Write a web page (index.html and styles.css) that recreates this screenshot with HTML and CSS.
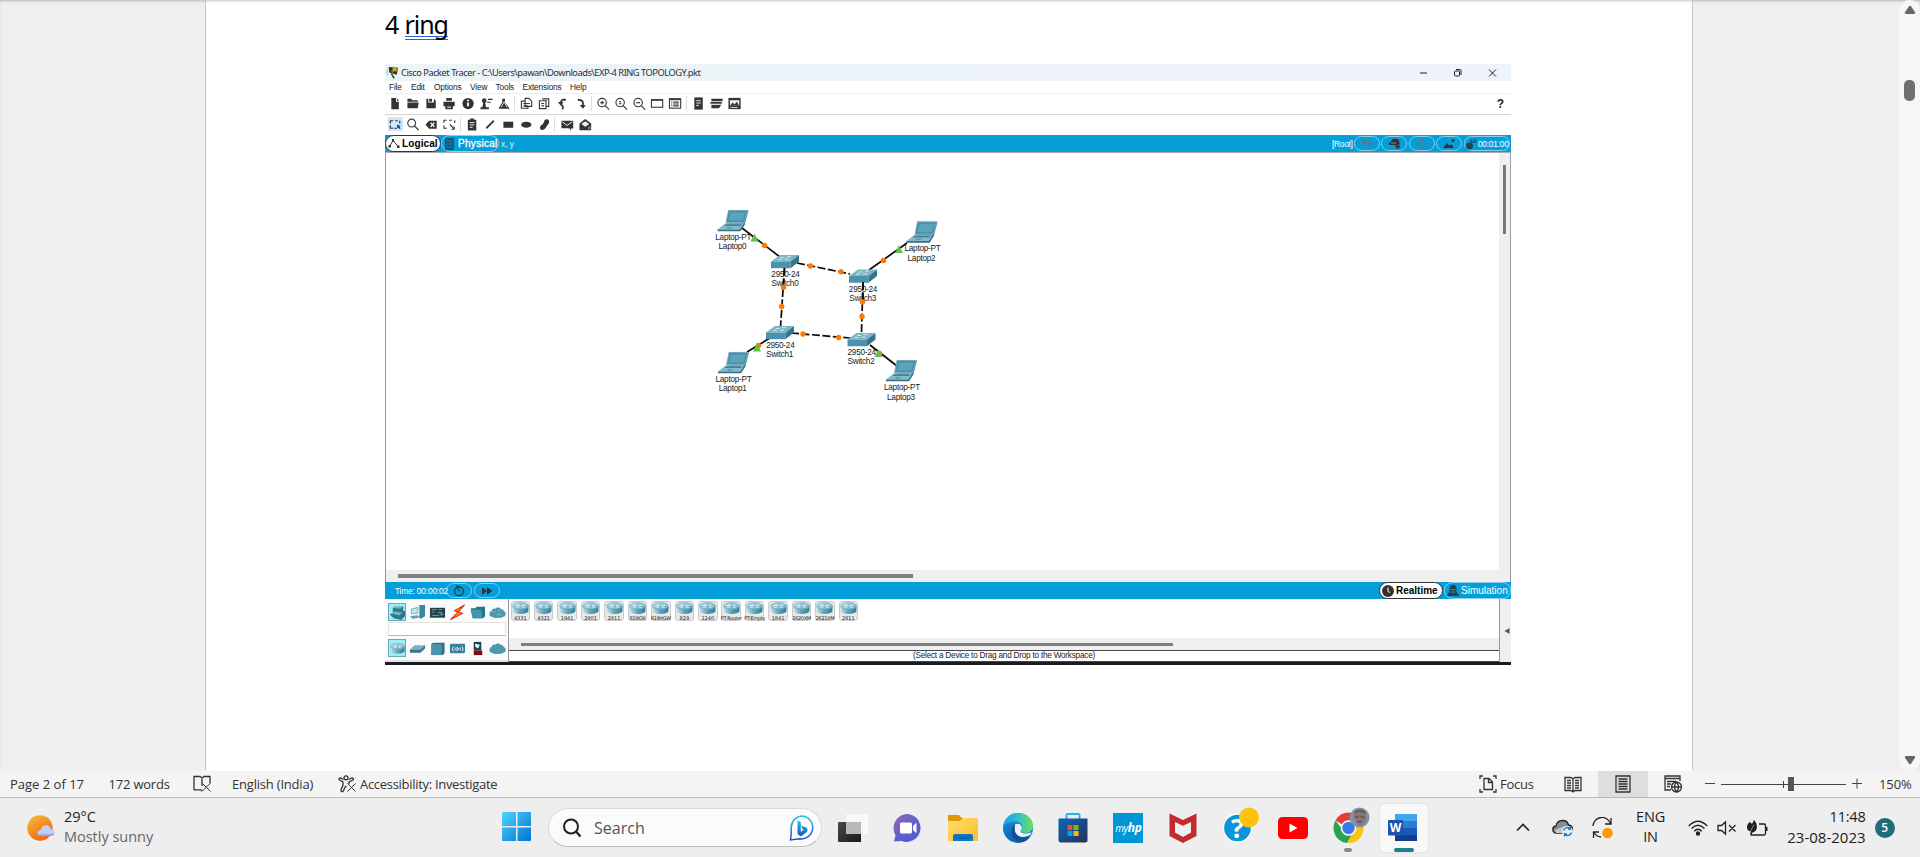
FILE: index.html
```html
<!DOCTYPE html>
<html lang="en">
<head>
<meta charset="utf-8">
<title>4 ring - Word</title>
<link rel="stylesheet" href="styles.css">
</head>
<body>
<svg class="defs" width="0" height="0">
  <defs>
    <linearGradient id="gTop" x1="0" y1="0" x2="1" y2="1"><stop offset="0" stop-color="#b4d9e4"/><stop offset="1" stop-color="#69a9be"/></linearGradient>
    <linearGradient id="gSide" x1="0" y1="0" x2="1" y2="0"><stop offset="0" stop-color="#c4e2ea"/><stop offset=".5" stop-color="#5fa3ba"/><stop offset="1" stop-color="#2f7f9c"/></linearGradient>
    <linearGradient id="gWin" x1="0" y1="0" x2="1" y2="1"><stop offset="0" stop-color="#4fd5ff"/><stop offset="1" stop-color="#0072d3"/></linearGradient>
    <linearGradient id="gBing" x1="0" y1="0" x2="0" y2="1"><stop offset="0" stop-color="#22c3e6"/><stop offset="1" stop-color="#1b4fc4"/></linearGradient>
    <linearGradient id="gChat" x1="0" y1="0" x2="1" y2="1"><stop offset="0" stop-color="#9568b4"/><stop offset=".6" stop-color="#5a5fd0"/><stop offset="1" stop-color="#5059c9"/></linearGradient>
    <linearGradient id="gFold" x1="0" y1="0" x2="1" y2="1"><stop offset="0" stop-color="#ffdc6e"/><stop offset="1" stop-color="#fbbf2b"/></linearGradient>
    <linearGradient id="gEdgeA" x1="0" y1="0" x2="1" y2="0"><stop offset="0" stop-color="#1ea0e0"/><stop offset=".5" stop-color="#30c0cc"/><stop offset="1" stop-color="#6be05a"/></linearGradient>
    <linearGradient id="gEdgeB" x1="0" y1="0" x2="0" y2="1"><stop offset="0" stop-color="#1b93e0"/><stop offset="1" stop-color="#0d62b5"/></linearGradient>
    <linearGradient id="gStore" x1="0" y1="0" x2="1" y2="1"><stop offset="0" stop-color="#0a67b8"/><stop offset="1" stop-color="#2a2f55"/></linearGradient>
    <linearGradient id="gSun" x1="0" y1="0" x2=".6" y2="1"><stop offset="0" stop-color="#f3bf36"/><stop offset="1" stop-color="#f3660f"/></linearGradient>
    <linearGradient id="gTask" x1="0" y1="0" x2="1" y2="1"><stop offset="0" stop-color="#4a4a48"/><stop offset="1" stop-color="#191a18"/></linearGradient>
    <symbol id="router" viewBox="0 0 18 13">
      <path d="M.6 4v5.2C.6 11.3 4.4 12.6 9 12.6s8.4-1.3 8.4-3.4V4z" fill="url(#gSide)"/>
      <ellipse cx="9" cy="4.1" rx="8.4" ry="3.7" fill="url(#gTop)" stroke="#5a9db3" stroke-width=".5"/>
      <path d="M3.5 3.3l4 .5M6 2.2l2 1.4M14.5 3l-4 .8M10.5 5l3 .9M7.500 5l-3 1" stroke="#e4f3f6" stroke-width=".9"/>
    </symbol>
    <symbol id="laptop" viewBox="0 0 33 23">
      <path d="M12 1h19q1 0 .8 1.2L28.200 16 24 17.500 9.500 14z" fill="#3c7891"/>
      <path d="M12 1.400h19L28 13.500H9.500z" fill="#4a8fa9" stroke="#86b9ca" stroke-width=".8"/>
      <path d="M14 3.600h14.500l-2 8H12z" fill="#5ba4bc"/>
      <path d="M9 14.200h18.500L23 20.500H1z" fill="#85b8c8"/>
      <path d="M9.500 15.200h15.500l-1.300 1.900H7.300z" fill="#477f96"/>
      <path d="M11 18.200h5l-1 1.400h-5z" fill="#5a94a9"/>
      <path d="M1 20.500H23l4.500-6 .7 1.200L24 22.200H1z" fill="#316f88"/>
    </symbol>
    <symbol id="switch" viewBox="0 0 30 15">
      <path d="M10 1h19L20.500 7.500H1z" fill="#7fb4c5"/>
      <path d="M1 7.500h19.500v6.700H1z" fill="#4b93ac"/>
      <path d="M20.500 7.500L29 1v6.500l-8.500 6.700z" fill="#34748d"/>
      <path d="M10.500 3.500h4M17 2.700h4M8 5.600h4M15 5.200h4" stroke="#d8edf2" stroke-width=".9"/>
    </symbol>
    <symbol id="cloud" viewBox="0 0 16 12"><path d="M3.500 10.300C1.500 10.300.4 8.900.4 7.200c0-1.500 1-2.500 2.300-2.800C3 2.500 4.600 2 6 2.500 7 1 10 1 11 2.700c1.500-.4 2.600.5 2.800 1.900 1.200.4 1.900 1.300 1.900 2.700 0 1.600-1.200 2.900-3 2.900-1.500 1.400-3.500 1.300-4.500.4-1.500 1-3.700.8-4.700-.3z" fill="#4f97ac"/></symbol>
  </defs>
</svg>

<main class="desk">
  <div class="gutter"></div>
  <section class="page">
    <h1 class="heading">4 <span class="grammar">ring</span></h1>

    <div class="tracer">
      <div class="t-title">
        <svg class="t-logo" viewBox="0 0 12 12"><path d="M2.500 1l8.500.5L10 8 3 6z" fill="#26351f"/><path d="M6 1.500h4V5H6z" fill="#d79a25"/><path d="M4 4l3 .5-.5 2.500z" fill="#3ca14b"/><path d="M5 7l2.500 4.500" stroke="#333" stroke-width="1.300"/><path d="M1.500 3Q0 6 2 8.500" fill="none" stroke="#aaa" stroke-width=".8"/></svg>
        <span class="t-name">Cisco Packet Tracer - C:\Users\pawan\Downloads\EXP-4 RING TOPOLOGY.pkt</span>
        <svg class="t-ctl" viewBox="0 0 80 10" fill="none" stroke="#222"><path d="M2 5h7"/><rect x="36.500" y="3" width="5" height="5" rx="1"/><path d="M38 1.500h4q1 0 1 1V7M71 1.500l7 7M78 1.500l-7 7"/></svg>
      </div>
      <nav class="t-menu"><span class="m1">File</span><span class="m2">Edit</span><span class="m3">Options</span><span class="m4">View</span><span class="m5">Tools</span><span class="m6">Extensions</span><span>Help</span></nav>
      <div class="t-tools first">
        <svg viewBox="0 0 18 16"><path d="M5 2h5v4h3v8H5z"/><path d="M11 2l2 3h-2z"/></svg>
        <svg viewBox="0 0 18 16"><path d="M3 3h4l1 1.500h6V6H3zM3 7h12l-1 6H3z"/></svg>
        <svg viewBox="0 0 18 16"><path d="M4 3h2v4h6V3l2 2v8H4z"/><path d="M7 3h3v3H7z"/></svg>
        <svg viewBox="0 0 18 16"><path d="M6 2h6v3H6zM3 6h12v5h-2v3H5v-3H3z"/><path d="M7 11h4v2H7z" fill="#aaa"/></svg>
        <svg viewBox="0 0 18 16"><circle cx="9" cy="8" r="6"/><path d="M9 7v4M9 4v1.500" stroke="#fff" stroke-width="2"/></svg>
        <svg viewBox="0 0 18 16"><circle cx="7" cy="5" r="2.500"/><path d="M6 7h2l1 5h3v2H3v-2h2zM11 3h5v1.300h-5zM10 6h4v1.200h-4z"/></svg>
        <svg viewBox="0 0 18 16"><path d="M7 3h3v4l5 6.500H3L7 7z"/><path d="M6 12l3-6 3 6" stroke="#ddd" fill="none"/></svg>
        <i></i>
        <svg viewBox="0 0 18 16" class="line"><path d="M8 2.500h4l3 3V11H8zM4 5.500h4M4 5v8h7v-2M6 8h7M6 10.500h5"/></svg>
        <svg viewBox="0 0 18 16" class="line"><path d="M7 3h7v8h-3M4 5h7v8.500H4zM6 8h3M6 10.500h3M10 5h2"/></svg>
        <svg viewBox="0 0 18 16" class="line bold"><path d="M9 14q2-2-.5-4.500Q7 5 9.500 4H13"/><path d="M4.500 6.500h6L7.500 10z" fill="#333" stroke="none"/></svg>
        <svg viewBox="0 0 18 16" class="line bold"><path d="M5.500 4q5 0 5.500 3v3"/><path d="M7.500 9.500h6.500L11 13.500z" fill="#333" stroke="none"/></svg>
        <i></i>
        <svg viewBox="0 0 18 16" class="line"><circle cx="8" cy="7" r="4.500"/><path d="M11 10l4.500 4.500M6 7h4M8 5v4"/></svg>
        <svg viewBox="0 0 18 16" class="line"><circle cx="8" cy="7" r="4.500"/><path d="M11 10l4.500 4.500M6.500 8.300h3M7 6h2"/></svg>
        <svg viewBox="0 0 18 16" class="line"><circle cx="8" cy="7" r="4.500"/><path d="M11 10l4.500 4.500M6 7h4"/></svg>
        <svg viewBox="0 0 18 16" class="line"><rect x="3" y="4" width="12" height="8"/><path d="M3 4.300h12" stroke-width="1.600"/></svg>
        <svg viewBox="0 0 18 16" class="line"><rect x="3" y="3" width="12" height="10"/><path d="M3 3.500h12" stroke-width="2"/><path d="M5 6.500h1M7 6.500h6M5 8.500h1M7 8.500h6M5 10.500h1M7 10.500h6"/></svg>
        <i></i>
        <svg viewBox="0 0 18 16"><path d="M5 1.500h9v13H5z"/><path d="M7 5h5M7 7.500h5M7 10h3" stroke="#eee"/></svg>
        <svg viewBox="0 0 18 16"><path d="M4 3h12v2.500H4zM3 6.500h12v2H3zM4 9.500h10v1l-2 2.500H4z"/><path d="M3 8.500h12" stroke="#aaa"/></svg>
        <svg viewBox="0 0 18 16"><path d="M3 2h13v12H3z"/><path d="M4.500 4.500h10v6h-10z" fill="#eee"/><path d="M4.500 10.500l3-3.500 2 2 2.500-3 2.500 4.500z"/><path d="M5 12.300h8" stroke="#ddd"/></svg>
        <b class="help">?</b>
      </div>
      <div class="t-tools second">
        <svg viewBox="0 0 18 16" class="line on"><path d="M4 7V4h3M9 4h3M14 4v3M4 9v3h3M8 12h3" stroke-width="1.300"/><path d="M11 8l4 1.500-1.500 1L15 12l-1 1-1.500-1.500-.8 1z" fill="#333" stroke="none"/></svg>
        <svg viewBox="0 0 18 16" class="line"><circle cx="7.500" cy="6.500" r="4.200"/><path d="M10.500 9.500l4.500 4.500" stroke-width="1.500"/></svg>
        <svg viewBox="0 0 18 16"><path d="M7 4h8v8.500H7L3 8.200z"/><path d="M8.500 6l4 4.500M12.500 6l-4 4.500" stroke="#fff" stroke-width="1.500"/></svg>
        <svg viewBox="0 0 18 16" class="line"><path d="M3.500 6V3.500h3M9 3.500h3M15 3.500v3M3.500 9v3h3M10 8l4.500 5M14.500 10v3h-3"/></svg>
        <i></i>
        <svg viewBox="0 0 18 16"><path d="M4.500 3h9v11.500h-9zM7 1.500h4V4H7z"/><path d="M6.500 6h5M6.500 8.500h5M6.500 11h3" stroke="#fff"/></svg>
        <svg viewBox="0 0 18 16" class="line bold"><path d="M5 12L13 4"/></svg>
        <svg viewBox="0 0 18 16"><path d="M4 5h10.500v6.500H4z"/></svg>
        <svg viewBox="0 0 18 16"><ellipse cx="9.200" cy="8.200" rx="5.500" ry="3.200"/></svg>
        <svg viewBox="0 0 18 16"><path d="M11 2.500q3.500-1 3.500 2.500 0 2-2 3.700-1 1.300-2 3.300-2.500 2.800-5 1.500-2-2.500.5-5 2-.6 2.500-2.500Q9 3.500 11 2.500z"/></svg>
        <i></i>
        <svg viewBox="0 0 18 16"><path d="M3 4h12.500v8H3z"/><path d="M4 5l5 4 5.500-4" fill="none" stroke="#fff"/><path d="M12.500 9v5m-2-2.500h5" stroke="#333"/></svg>
        <svg viewBox="0 0 18 16"><path d="M3 7l6.200-5 6.300 5v7H3z"/><path d="M5 7.500L9.200 4.500 13.500 7.500l-4.300 3z" fill="#eee"/><circle cx="13.500" cy="11.500" r="1.700" fill="#777"/></svg>
      </div>
      <div class="t-blue">
        <span class="tab on"><svg width="12" height="12" viewBox="0 0 12 12"><path d="M1.500 8.500L5 2.500l5 6" fill="none" stroke="#333"/><path d="M.5 7h2.500v2.500H.5zM4 1h2v2.500H4zM9 7.500h2.500V10H9z" fill="#333"/></svg><em class="w-log">Logical</em></span>
        <span class="tab phys"><svg width="9" height="12" viewBox="0 0 9 12"><path d="M0 0h9v12H0z" fill="#1d5675"/><path d="M1 3h7M1 6h7M1 9h7" stroke="#0d86bd"/></svg><em class="w-phy">Physical</em></span>
        <span class="xy">x, y</span>
        <span class="root">[Root]</span>
        <span class="pill"><svg viewBox="0 0 24 12" fill="none" stroke="#716d78" stroke-width="1.500"><path d="M8 4h7q3 3-1 6M10.500 1.500L7.500 4l3 2.500"/></svg></span>
        <span class="pill"><svg viewBox="0 0 24 12"><path d="M7 7q-1-3 2-3 1-4 4-3 4-1 4 3 2 1-.5 3z" fill="#333"/><path d="M9 5h5" stroke="#888"/><path d="M15.500 6v5M13 8.500h5" stroke="#333" stroke-width="1.500"/></svg></span>
        <span class="pill"><svg viewBox="0 0 24 12" fill="#6b6f80"><path d="M12 0l2.500 3h-5zM12 12l2.500-3h-5zM6 6l3-2.500v5zM18 6l-3-2.500v5z"/></svg></span>
        <span class="pill"><svg viewBox="0 0 24 12" fill="#333"><path d="M6 10l4-5 2.500 3L14 6l3 4z"/><circle cx="16" cy="2.500" r="1.500"/></svg></span>
        <span class="pill clock"><svg viewBox="0 0 13 12" fill="#23465a"><circle cx="4.500" cy="8" r="3.500"/><path d="M6 4h5M8 2h4M6 1.500v3" stroke="#23303a"/></svg><em>00:01:00</em></span>
      </div>
      <div class="t-work">
        <div class="canvas">
          <svg class="topology" viewBox="700 200 250 210" width="250" height="210">
            <g stroke="#0a0a0a" stroke-width="1.700" fill="none">
              <path d="M742 228l38 29M907 243l-38 27M770 338l-23 14M870 345l27 21"/>
              <path stroke-dasharray="8 2.500" d="M797 263l53 11M784.500 268l-4 59M863 282l-1.500 50M791 333l59 5"/>
            </g>
            <use href="#laptop" x="716.500" y="209" width="33" height="23"/>
            <use href="#laptop" x="905.500" y="220.500" width="33" height="23"/>
            <use href="#laptop" x="717" y="351" width="33" height="23"/>
            <use href="#laptop" x="885" y="359" width="33" height="23"/>
            <use href="#switch" x="770" y="254" width="30" height="15"/>
            <use href="#switch" x="848" y="268.500" width="30" height="15"/>
            <use href="#switch" x="765" y="325" width="30" height="15"/>
            <use href="#switch" x="846.500" y="332" width="30" height="15"/>
            <g class="labels">
              <text x="733.300" y="240">Laptop-PT</text><text x="732.500" y="249.300">Laptop0</text>
              <text x="922.500" y="251">Laptop-PT</text><text x="921.500" y="260.500">Laptop2</text>
              <text x="733.500" y="382">Laptop-PT</text><text x="732.700" y="391.300">Laptop1</text>
              <text x="902" y="390">Laptop-PT</text><text x="901" y="399.500">Laptop3</text>
              <text x="785.500" y="276.500">2950-24</text><text x="785" y="285.800">Switch0</text>
              <text x="863" y="291.500">2950-24</text><text x="862.700" y="300.500">Switch3</text>
              <text x="780.300" y="347.500">2950-24</text><text x="779.700" y="357">Switch1</text>
              <text x="861.700" y="354.500">2950-24</text><text x="861" y="364">Switch2</text>
            </g>
            <path stroke="#0a0a0a" stroke-width="1.700" stroke-dasharray="8 2.500" d="M784.500 268l-1.500 22M863 282v20"/>
            <g fill="#ff7800"><circle cx="764.500" cy="245.500" r="2.700"/><circle cx="810.500" cy="266" r="2.700"/><circle cx="841" cy="271.700" r="2.700"/><circle cx="883.500" cy="260.500" r="2.700"/><circle cx="783.500" cy="287.300" r="2.700"/><circle cx="781.700" cy="306.500" r="2.700"/><circle cx="862.500" cy="302" r="2.700"/><circle cx="862" cy="316.500" r="2.700"/><circle cx="803" cy="334" r="2.700"/><circle cx="838.700" cy="337.500" r="2.700"/><circle cx="758.500" cy="345.500" r="2.700"/><circle cx="879.500" cy="353.500" r="2.700"/></g>
            <g fill="#5dc24a"><path d="M754.500 233.500l4 8h-8zM899 245l4 8h-8zM757 343l4 8.500h-8zM878.500 349l4 8h-8z"/></g>
          </svg>
        </div>
        <div class="vbar"><div></div></div>
      </div>
      <div class="hbar"><div></div></div>
      <div class="t-blue low">
        <span class="time">Time: 00:00:02</span>
        <span class="pill"><svg viewBox="0 0 24 12" fill="none" stroke="#263b48" stroke-width="1.300"><circle cx="12" cy="6.300" r="4.400"/><path d="M12 6.300V4M9 .5l3 1.500-2 2"/></svg></span>
        <span class="pill"><svg viewBox="0 0 24 12" fill="#33333a"><path d="M7 2l5 4-5 4zM12 2l5.500 4-5.500 4z"/></svg></span>
        <span class="tab on real"><svg width="12" height="12" viewBox="0 0 12 12"><circle cx="6" cy="6" r="6" fill="#333"/><path d="M6 2.500v4l2 1" fill="none" stroke="#fff"/></svg><em class="w-real">Realtime</em></span>
        <span class="tab sim"><svg width="12" height="11" viewBox="0 0 12 11" fill="#24414f"><path d="M4 0h4l1.500 3v4L12 10v1H0v-1l2.500-3V3z"/><path d="M3.500 4.500h5M3.500 7h5" stroke="#3790ba"/></svg><em class="w-sim">Simulation</em></span>
      </div>
      <div class="t-bottom">
        <div class="kinds">
          <div class="kindrow">
            <span class="sel"><svg viewBox="0 0 18 18"><path d="M4 4l3-2h8v5l2 1v5l-4 4-8-2-4-4 3-2z" fill="#2d788f"/><path d="M4 4l3-2h8l-3 3zM2 10l4-2 8 1-3 3z" fill="#79b7c6"/></svg></span>
            <span><svg viewBox="0 0 18 18"><path d="M11 1h6v12l-5 3-1-2z" fill="#3b87a2"/><path d="M2 5l8-2v7l-8 1z" fill="#7cb6c9"/><path d="M3 6l6-1.500V9l-6 1z" fill="#c9e3ea"/><path d="M1 13l8-1 3 2-8 2z" fill="#629fb5"/></svg></span>
            <span><svg viewBox="0 0 18 18"><path d="M1 4h16v10.500H1z" fill="#24404a"/><path d="M3 6h5M3 8.500h3M10 6h4M9 9h5M3 12h8" stroke="#65a4ac"/><path d="M12 10h3v2h-3z" fill="#4f9eb6"/></svg></span>
            <span><svg viewBox="0 0 18 18"><path d="M16.500 1L6 7l3.500 1.500L1.500 16.500 14 10l-4-2z" fill="#ff9c00" stroke="#ed2815" stroke-width="1.200"/></svg></span>
            <span><svg viewBox="0 0 18 18"><path d="M2 4.500h5l1-1.500h9v10l-2 2H4z" fill="#25768a"/><path d="M1.500 6H13l1 9H4z" fill="#4395a7"/></svg></span>
            <span><svg viewBox="0 0 16 12"><use href="#cloud"/><path d="M3 5.500h3m2-1.500h3m-4 4h5" stroke="#75b4c5"/></svg></span>
          </div>
          <div class="kindbox"></div>
          <div class="kindrow">
            <span class="sel"><svg viewBox="0 0 18 18"><use href="#router" x="1" y="3" width="16" height="12"/></svg></span>
            <span><svg viewBox="0 0 18 18"><path d="M6 5.500h11l-5 4.500H1z" fill="#7cb0c2"/><path d="M1 10h11l5-4.500V9l-5 4.500H1z" fill="#34748c"/></svg></span>
            <span><svg viewBox="0 0 18 18"><path d="M2.500 4l2-1h12v11l-2 2h-12z" fill="#2f7189"/><path d="M2.500 4.500h11V16h-11z" fill="#4b93aa"/></svg></span>
            <span><svg viewBox="0 0 18 18"><path d="M1 5l1-1h15v9l-1 1H1z" fill="#38809a"/><path d="M4.500 7q-2 2.500 0 5M6.500 8v3M8.500 7.500l2 2-2 2zM12 8v3M14 7q2 2.500 0 5" fill="none" stroke="#d9f0f5"/></svg></span>
            <span><svg viewBox="0 0 18 18"><path d="M5 2h8v9H5z" fill="#1d4250"/><path d="M6.500 4l5 1-2 4-3-2z" fill="#dff"/><path d="M5 11h9v5H5z" fill="#7a0d12"/></svg></span>
            <span><svg viewBox="0 0 16 12"><use href="#cloud"/></svg></span>
          </div>
        </div>
        <div class="models">
          <div class="modelrow">
            <span><svg><use href="#router"/></svg><em>4331</em></span>
            <span><svg><use href="#router"/></svg><em>4321</em></span>
            <span><svg><use href="#router"/></svg><em>1941</em></span>
            <span><svg><use href="#router"/></svg><em>2901</em></span>
            <span><svg><use href="#router"/></svg><em>2911</em></span>
            <span><svg><use href="#router"/></svg><em class="tight">819IOX</em></span>
            <span><svg><use href="#router"/></svg><em class="tight">819HGW</em></span>
            <span><svg><use href="#router"/></svg><em>829</em></span>
            <span><svg><use href="#router"/></svg><em>1240</em></span>
            <span><svg><use href="#router"/></svg><em class="tight">PT-Router</em></span>
            <span><svg><use href="#router"/></svg><em class="tight">PT-Empty</em></span>
            <span><svg><use href="#router"/></svg><em>1841</em></span>
            <span><svg><use href="#router"/></svg><em class="tight">2620XM</em></span>
            <span><svg><use href="#router"/></svg><em class="tight">2621XM</em></span>
            <span><svg><use href="#router"/></svg><em>2811</em></span>
          </div>
          <div class="modelbar"><div></div></div>
          <div class="hint">(Select a Device to Drag and Drop to the Workspace)</div>
        </div>
        <div class="fold"><svg width="6" height="6" viewBox="0 0 6 6"><path d="M.5 3l5-3v6z" fill="#555"/></svg></div>
      </div>
    </div>
  </section>
  <div class="gutter right"></div>
  <div class="scroll">
    <svg width="12" height="10" viewBox="0 0 12 10"><path d="M5 1.300q1-1.300 2 0l4 6q.5 1.700-1 1.700H2Q.5 9 1 7.300z"/></svg>
    <div class="thumb"></div>
    <svg class="down" width="12" height="10" viewBox="0 0 12 10"><path d="M5 8.700q1 1.300 2 0l4-6Q11.500 1 10 1H2Q.5 1 1 2.700z"/></svg>
  </div>
</main>

<footer class="status">
  <span class="s-page">Page 2 of 17</span>
  <span class="s-words">172 words</span>
  <svg class="s-book" width="19" height="18" viewBox="0 0 19 18" fill="none" stroke="#333" stroke-width="1.300"><path d="M9 16l-1-1.200H1V1.500h6L9 3l2-1.500h6V8M9 3v8"/><path d="M9 8l8.500 8.500M17.500 8L9 16.500" stroke-width="1"/></svg>
  <span class="s-lang">English (India)</span>
  <svg class="s-acc" width="19" height="18" viewBox="0 0 19 18" fill="none" stroke="#333" stroke-width="1.300"><circle cx="8" cy="2.800" r="2"/><path d="M5.500 4.500L2.500 3Q0 3.500 1.500 5L5 7v3l-2 5q0 2 2 1.500l2.500-5h1M10.500 4.500L14 3q2.500.5 1 2L11 7v2"/><path d="M9.500 8.500l8 8M17.500 8.500l-8 8" stroke-width="1"/></svg>
  <span class="s-acctext">Accessibility: Investigate</span>
  <svg class="s-focus" width="18" height="18" viewBox="0 0 18 18" fill="none" stroke="#333" stroke-width="1.300"><path d="M4 1H1v3M14 1h3v3M4 17H1v-3M14 17h3v-3M5 3.500h5l3.500 3.500v7.500H5zM9.500 3.500V7.500h4"/></svg>
  <span class="s-focustext">Focus</span>
  <svg class="s-read" width="18" height="17" viewBox="0 0 18 17" fill="none" stroke="#333" stroke-width="1.300"><path d="M9 3L7 1.500H1v13h6L9 16l2-1.500h6v-13h-6zM9 3v13M3 4.500h4M3 7h4M3 9.500h4M3 12h4M11 4.500h4M11 7h4M11 9.500h4M11 12h4"/></svg>
  <span class="s-print"><svg width="16" height="18" viewBox="0 0 16 18" fill="none" stroke="#333" stroke-width="1.300"><path d="M1 1h14v16H1zM3.500 4h9M3.500 6.500h9M3.500 9h9M3.500 11.500h9M3.500 14h9"/></svg></span>
  <svg class="s-web" width="19" height="18" viewBox="0 0 19 18" fill="none" stroke="#333" stroke-width="1.300"><path d="M7 15H1V1h15v5M1 3.500h15M3 6.500h9M3 9h4M3 11.500h3"/><circle cx="12.500" cy="12" r="5"/><path d="M7.500 12h10M12.500 7q-4 5 0 10M12.500 7q4 5 0 10"/></svg>
  <svg class="s-zoom" width="158" height="18" viewBox="0 0 158 18" stroke="#444"><path d="M0 8.500h10M16 9.500h125M78.500 6v7M147 8.500h10M152 3.500v10"/><path d="M83 2h6v14h-6z" fill="#555" stroke="none"/></svg>
  <span class="s-pct">150%</span>
</footer>

<footer class="taskbar">
  <svg class="sun" width="28" height="26" viewBox="0 0 28 26"><circle cx="13" cy="13" r="12.700" fill="url(#gSun)"/><path d="M14 21q-3.500 0-3.500-3 0-2.500 3-3 1.500-5 6-4.800 3.500.3 4.500 4 3.500.8 3.500 3.500 0 3.300-3.500 3.300z" fill="#bcd0f6"/><path d="M14 21h10q3-.3 3.500-2.500-7 1-16 .5.500 1.800 2.500 2z" fill="#8eabe8"/></svg>
  <div class="weather"><span class="deg">29°C</span><span class="sky">Mostly sunny</span></div>
  <div class="apps">
    <span class="app"><svg class="win" width="30" height="30" viewBox="0 0 30 30"><path d="M1 0h13v14H0V1zM15.500 0H28q1 0 1 1v13H15.500zM0 15.500h14V29H1q-1 0-1-1zM15.500 15.500H29V28q0 1-1 1H15.500z" fill="url(#gWin)"/></svg></span>
    <div class="search">
      <svg width="20" height="20" viewBox="0 0 20 20" fill="none" stroke="#222" stroke-width="2"><circle cx="9" cy="8.500" r="7"/><path d="M14 13.500l4.500 5" stroke-width="2.400"/></svg>
      <span>Search</span>
      <svg class="bing" width="26" height="26" viewBox="0 0 26 26"><path d="M13.500 1a11.500 11.500 0 1 1-3 22.800L1.500 25l.7-6V12.500A11.500 11.500 0 0 1 13.500 1z" fill="#fff" stroke="url(#gBing)" stroke-width="1.500"/><path d="M8.500 5.500l3.300 1.500v9.800l3-1.800-1.300-.8-1.300-3.700 5 2q2.800 2.500 0 5l-5.400 4-3.300-2.500z" fill="url(#gBing)"/></svg>
    </div>
    <span class="app"><svg width="30" height="28" viewBox="0 0 30 28"><path d="M0 9q0-1 1-1h22v20H1q-1 0-1-1z" fill="url(#gTask)"/><path d="M8 0h20q2 0 2 2v18H9q-1 0-1-1z" fill="#f8f8f8"/><path d="M8 8h15v12H9q-1 0-1-1z" fill="#b9b9b8"/></svg></span>
    <span class="app"><svg width="30" height="30" viewBox="0 0 30 30"><path d="M15 1a14 14 0 1 1-6.500 27L1 28.500 2.500 22A14 14 0 0 1 15 1z" fill="url(#gChat)"/><rect x="7" y="9.500" width="12" height="11" rx="1.500" fill="#fff"/><path d="M20 13l3.500-3.300v10.600L20 17z" fill="#fff"/></svg></span>
    <span class="app"><svg width="32" height="28" viewBox="0 0 32 28"><path d="M1 2q0-1 1-1h10l3 3h14q2 0 2 2v5H1z" fill="#dc9a06"/><path d="M1 7h12l3-3h14q1 0 1 1v22H1z" fill="url(#gFold)"/><path d="M6 27v-5q0-2 2-2h16q2 0 2 2v5z" fill="#0f76c4"/><path d="M9 24h14" stroke="#09508e"/></svg></span>
    <span class="app"><svg width="30" height="30" viewBox="0 0 30 30"><circle cx="15" cy="15" r="15" fill="url(#gEdgeB)"/><path d="M.3 13.500C1.200 5 7.500 0 15 0c8.500 0 15 5.500 15 12.500 0 5-3.500 7.500-7.500 7.500-3 0-5-1-5-2.500s2-1.500 1.500-4.500C18.500 10 15.500 8.500 12 8.500 6.500 8.500 2 11 .3 13.500z" fill="url(#gEdgeA)"/><path d="M12 11.500q4-2 6.500 1.500.8 3-1 4.500 0 3.500 6 3 3-.3 5-1.500l-1.200 3Q16 27 12 19q-1-4 0-7.500z" fill="#edf2f5"/><path d="M12 11.500q-4 2-4 8.500 2 7.500 10 9.500 6-1 9.500-6.500Q17 27 12.500 20q-1.500-4-.5-8.500z" fill="#124f98"/></svg></span>
    <span class="app"><svg width="30" height="30" viewBox="0 0 30 30"><path d="M8.500 7V2q0-1 1-1h11q1 0 1 1v5" fill="none" stroke="#27b4ef" stroke-width="2"/><path d="M.5 5.500h29V27q0 2.500-2.500 2.500H3Q.5 29.500.5 27z" fill="url(#gStore)"/><path d="M9.500 12H14.500v5H9.500z" fill="#f25022"/><path d="M15.500 12h5v5h-5z" fill="#7fba00"/><path d="M9.500 18H14.500v5H9.500z" fill="#00a4ef"/><path d="M15.500 18h5v5h-5z" fill="#ffb900"/></svg></span>
    <span class="app"><span class="myhp">my<b>hp</b></span></span>
    <span class="app"><svg width="28" height="30" viewBox="0 0 28 30"><path d="M.5.500L14 7 27.500.500V23L14 30 .5 23z" fill="#c32b2e"/><path d="M6 9l8 3.800L22 9v10.500L14 24l-8-4.500z" fill="#eee"/></svg></span>
    <span class="app"><svg class="over" width="37" height="44" viewBox="0 0 37 44"><circle cx="14.500" cy="21" r="14" fill="#0a96d5" stroke="#fff" stroke-width="1.300"/><text x="14.500" y="30.500" class="q">?</text><circle cx="26" cy="10.500" r="10" fill="#ffc20e"/></svg></span>
    <span class="app"><svg width="30" height="22" viewBox="0 0 30 22"><rect width="30" height="22" rx="4.500" fill="#f00"/><path d="M11.500 6.500l8 4.500-8 4.500z" fill="#fff"/></svg></span>
    <span class="app dot"><svg class="over chrome" width="37" height="36" viewBox="0 0 37 36"><path d="M2.500 13.500A15 15 0 0 1 29 13.500L15.500 21z" fill="#df3f33"/><path d="M2.500 13.500A15 15 0 0 0 14 36l7-12-11-.5z" fill="#2ba24c"/><path d="M28.500 13.500A15 15 0 0 1 14 36l7.500-12-5-10.500z" fill="#fbc313"/><circle cx="15.500" cy="21" r="7" fill="#3b78e7" stroke="#fff" stroke-width="1.500"/><circle cx="26.500" cy="10.500" r="10" fill="#8292a6"/><path d="M21 10q0-6 6-6t6 6q0 7-5.500 8.500Q22 17 21 10z" fill="#8b7474"/><path d="M21 7q5-5 12 0l-1-3q-5-3-10 0z" fill="#5c5960"/><path d="M22 10h4m1.500 0h4M24 14.500h5" stroke="#4e424c"/></svg></span>
    <span class="app word"><svg width="30" height="28" viewBox="0 0 30 28"><path d="M7 0h22v7H7z" fill="#41a5ee"/><path d="M7 7h22v7H7z" fill="#2b7cd3"/><path d="M7 14h22v7H7z" fill="#185abd"/><path d="M7 21h22v6H7z" fill="#103f91"/><rect y="6" width="15" height="15.500" rx="1" fill="#1d54b3"/><text x="7.500" y="18" class="w">W</text></svg></span>
  </div>
  <div class="tray">
    <svg class="k-up" width="14" height="9" viewBox="0 0 14 9"><path d="M1 7.500l6-6 6 6" fill="none" stroke="#222" stroke-width="1.700"/></svg>
    <svg class="k-cloud" width="22" height="18" viewBox="0 0 22 18"><path d="M4 14Q.8 13.500.8 10.500.8 7.500 4 7q1-5.500 6.500-5.500 5 0 6 4.500 4 .5 4 4.500 0 3.500-3.500 3.500z" fill="#8b8b8b" stroke="#222" stroke-width="1.300"/><path d="M3 11L14 6.500 20 10l-2 4H4z" fill="#c7c7c7"/><circle cx="15.500" cy="12.500" r="5.500" fill="#eee"/><path d="M11.500 11.500a4 4 0 0 1 7-1.500v-2.500m0 2.500h-2.500M19.500 13.500a4 4 0 0 1-7 1.500v2.500m0-2.500H15" fill="none" stroke="#1676c9" stroke-width="1.300"/></svg>
    <svg class="k-sync" width="22" height="22" viewBox="0 0 22 22"><path d="M1 9A9 9 0 0 1 18.500 6.500M19 1v6h-6M9 20A9 9 0 0 1 2 15.500M1.500 21v-6H7" fill="none" stroke="#222" stroke-width="1.300"/><circle cx="15.500" cy="16" r="5.300" fill="#ff9800"/></svg>
    <div class="k-lang"><span>ENG</span><span>IN</span></div>
    <svg class="k-wifi" width="20" height="16" viewBox="0 0 20 16" fill="none" stroke="#222" stroke-width="1.400"><path d="M.8 6Q10-3.500 19.200 6M3.500 8.500Q10 2 16.500 8.500M6.200 11.200Q10 7.500 13.800 11.200"/><circle cx="10" cy="13.500" r="1.500" fill="#222"/></svg>
    <svg class="k-vol" width="20" height="16" viewBox="0 0 20 16" fill="none" stroke="#222" stroke-width="1.300"><path d="M1 5.500h3.500L8.500 2v12l-4-3.500H1zM12 5l6.500 6.500M18.500 5L12 11.500"/></svg>
    <svg class="k-bat" width="21" height="18" viewBox="0 0 21 18"><path d="M8 16H4V14M12 5h5q1.500 0 1.500 1.500v8Q18.500 16 17 16H6" fill="none" stroke="#222" stroke-width="1.300"/><path d="M18.500 8h2v4h-2z" fill="#222"/><path d="M7 1q3 3 3 6.500T7 13q-2 .5-3 2H3l1-2.500Q0 12 0 8.500q0-4 3-5.500l2 2z" fill="#1e1e1e"/><path d="M3.500 12L7 5.500" stroke="#888"/></svg>
    <div class="k-time"><span class="c1">11:48</span><span class="c2">23-08-2023</span></div>
    <span class="k-badge">5</span>
  </div>
</footer>
</body>
</html>
```

FILE: styles.css
```css
* { box-sizing: border-box; }
html, body { margin: 0; height: 857px; overflow: hidden; }
body {
  width: 1920px;
  display: flex;
  flex-direction: column;
  background: #eee;
  color: #222;
  font-family: "Open Sans", "Noto Sans", sans-serif;
}
em { font-style: normal; }
span, em, text { white-space: nowrap; }
svg { display: block; flex: none; }
.defs { position: absolute; }

/* document area */
.desk { display: flex; height: 771px; background: #efefef; box-shadow: inset 0 2px 3px -1px #b5b5b5; }
.gutter { width: 206px; height: 770px; border-right: 1px solid #c4c4c4; }
.gutter.right { width: 207px; border: 0; border-left: 1px solid #c4c4c4; }
.page { width: 1486px; padding: 0 0 0 179px; background: #fff; box-shadow: inset 0 3px 3px -2px #c0c0c0; }
.heading {
  margin: 0;
  height: 64px;
  padding-top: 6px;
  font: 400 25px/36px "Noto Sans", sans-serif;
  letter-spacing: -1.1px;
  word-spacing: 1px;
  color: #000;
}
.grammar { display: inline-block; height: 34px; line-height: 36px; border-bottom: 4px double #2a62d8; }
.scroll { width: 21px; height: 771px; padding: 5px 0 6px 5px; display: flex; flex-direction: column; background: #f6f6f6; border-radius: 10px; fill: #666; }
.thumb { width: 11px; height: 21px; margin-top: 65px; border-radius: 5px; background: #707070; }
.down { margin-top: auto; }

/* packet tracer window */
.tracer { width: 1126px; height: 601px; display: flex; flex-direction: column; font-family: "Liberation Sans", Arial, sans-serif; background: #fff; border-bottom: 3px solid #1b1c20; }
.t-title { height: 17px; display: flex; align-items: center; background: linear-gradient(90deg, #ebf4f7, #eef2fa); }
.t-logo { width: 13px; height: 13px; margin-left: 1px; }
.t-name { width: 1019px; padding-left: 2px; font: 9.300px/16px "Noto Sans", sans-serif; letter-spacing: -.49px; color: #2b2f33; }
.t-ctl { width: 80px; height: 10px; }
.t-menu { height: 13px; display: flex; font-size: 8.300px; letter-spacing: -.15px; line-height: 13px; color: #222; border-bottom: 1px solid #eee; padding-left: 4px; }
.m1 { width: 22px; } .m2 { width: 23px; } .m3 { width: 36px; } .m4 { width: 25.500px; } .m5 { width: 27px; } .m6 { width: 47.500px; }
.t-tools { display: flex; align-items: center; fill: #333; }
.t-tools.first { height: 21px; padding: 0 0 1px 1px; border-bottom: 1px solid #d5d5d5; }
.t-tools.second { height: 20px; padding: 0 0 2px 1px; }
.t-tools svg { width: 18.150px; height: 15px; }
.t-tools .line { fill: none; stroke: #3a3a3a; stroke-width: 1.200; }
.t-tools .bold { stroke-width: 1.900; }
.t-tools .on { background: linear-gradient(#cce8ff, #cce8ff) center / 15px 14px no-repeat; }
.t-tools i { width: 1px; height: 15px; margin: 0 2.200px 0 1px; background: #ddd; }
.t-tools.second i { margin-right: 2.200px; }
.help { margin: 0 7px 0 auto; font-size: 12px; }

.t-blue { height: 17px; display: flex; align-items: center; background: #049fd9; color: #fff; }
.tab { height: 17px; display: flex; align-items: center; border: 1px solid #8bd0ee; border-radius: 9px; font-size: 10px; gap: 2px; padding-left: 2px; }
.tab.on { background: #fff; border-color: #333; color: #000; font-weight: 700; width: 56px; }
.w-log { letter-spacing: .1px; }
.tab.phys { width: 58px; padding-left: 3px; gap: 4px; }
.w-phy { -webkit-text-stroke: .3px #fff; letter-spacing: .3px; }
.xy { font-size: 8.300px; padding-left: 2px; width: 833px; opacity: .85; }
.root { font-size: 8.300px; letter-spacing: -.25px; width: 21.500px; }
.pill { width: 26px; height: 15px; margin-right: 1.500px; border: 1px solid #83cdee; border-radius: 8px; display: flex; align-items: center; justify-content: center; }
.pill svg { width: 24px; height: 12px; }
.pill.clock { width: 46.500px; margin: 0; font-size: 8.300px; letter-spacing: -.2px; }
.pill.clock svg { width: 13px; }
.t-blue.low { height: 17px; }
.time { font-size: 8.300px; letter-spacing: -.15px; width: 61px; padding-left: 10px; }
.tab.real { margin-left: auto; width: 64px; }
.tab.sim { width: 67px; margin-left: 1px; font-size: 10px; }

.t-work { height: 418px; display: flex; border-left: 1px solid #999; border-top: 1px solid #aaa; border-right: 1px solid #9d9da8; }
.canvas { position: relative; width: 1113px; }
.topology { position: absolute; left: 314px; top: 47px; }
.labels { font-size: 8.200px; letter-spacing: -.25px; text-anchor: middle; fill: #222; }
.vbar { width: 11px; background: #efefef; padding: 12px 0 0 4px; }
.vbar div { width: 3px; height: 69px; background: #777; }
.hbar { height: 12px; background: #efefef; border-left: 1px solid #999; border-right: 1px solid #9d9da8; padding: 4px 0 0 12px; }
.hbar div { width: 515px; height: 4px; background: #808080; }

.t-bottom { flex: 1; display: flex; background: #efefef; }
.kinds { width: 123px; padding: 4px 2px 0 3px; background: #fbfbfb; border-bottom: 2px solid #e4e4e4; }
.kindrow { display: flex; gap: 2px; height: 18px; }
.kindrow span { width: 18.100px; height: 18px; display: grid; place-items: center; }
.kindrow svg { width: 17px; height: 17px; }
.sel { background: #9ceef9; outline: 1px solid #6aa9b5; outline-offset: -1px; }
.kindbox { height: 14px; margin: 1px 0 3px; border: 1px solid #e3e3e3; border-bottom-color: #bbb; background: #fff; }
.models { width: 992px; border: solid #999; border-width: 0 1px 0 1px; display: flex; flex-direction: column; background: #fff; }
.modelrow { height: 39px; display: flex; gap: 3.950px; padding: 2px 0 0 1.500px; }
.modelrow span { width: 19.500px; height: 20px; display: flex; flex-direction: column; align-items: center; border: 1px solid #c9c9c9; border-radius: 3px; background: #e9e9e9; }
.modelrow svg { width: 17px; height: 12.500px; }
.modelrow em { font: 5px/6px "DejaVu Sans", sans-serif; color: #222; }
.modelrow .tight { letter-spacing: -.35px; }
.modelbar { height: 12px; background: #efefef; padding: 5px 0 0 12px; }
.modelbar div { width: 652px; height: 3px; background: #808080; }
.hint { flex: 1; border: solid #444; border-width: 1px 0; text-align: center; font-size: 8.200px; letter-spacing: -.22px; line-height: 10px; }
.fold { display: grid; place-items: center; width: 11px; padding-left: 2px; }

/* word status bar */
.status { height: 27px; display: flex; align-items: center; background: #f4f4f4; border-bottom: 1px solid #b9b9b9; padding-left: 10px; font-size: 13px; letter-spacing: -.1px; color: #333; }
.s-page { width: 98.500px; letter-spacing: 0; }
.s-words { width: 84.500px; letter-spacing: -.2px; }
.s-book { margin-right: 20px; }
.s-lang { width: 106px; letter-spacing: -.2px; }
.s-acc { margin-right: 3px; }
.s-acctext { width: 1119px; letter-spacing: -.3px; }
.s-focus { margin-right: 3px; }
.s-focustext { width: 64px; letter-spacing: -.25px; }
.s-print { width: 50px; height: 26px; margin: 0 16px; display: grid; place-items: center; background: #dedede; }
.s-web { margin-right: 22px; }
.s-zoom { margin-right: 16px; }

/* windows taskbar */
.taskbar { height: 59px; display: flex; align-items: center; background: #eee; padding-left: 27px; }
.weather { width: 401px; padding: 0 0 2px 9px; display: flex; flex-direction: column; font-size: 14.500px; line-height: 20px; letter-spacing: -.02px; }
.sky { color: #666; }
.apps { display: flex; align-items: center; gap: 7.050px; margin-left: 36px; }
.app { position: relative; width: 48px; height: 48px; display: grid; place-items: center; }
.win { margin: 0 0 1px 2px; }
.search { width: 274px; height: 39px; margin-left: 1px; padding: 0 6px 0 13px; display: flex; align-items: center; border: 1px solid #d9d9d9; border-bottom-color: #bdbdbd; border-radius: 20px; background: #fbfbfb; color: #555; font-size: 16px; }
.search span { padding-left: 12px; flex: 1; }
.myhp { width: 30px; height: 30px; background: #0096d6; color: #fff; text-align: center; font: italic 10px/29px "Open Sans", sans-serif; letter-spacing: -.4px; }
.myhp b { font-size: 12px; }
.app .over { position: absolute; left: 9px; top: 3px; }
.app .chrome { left: 8px; }
.q { font: 700 27px "Open Sans", sans-serif; fill: #fff; text-anchor: middle; }
.w { font: 700 12px "Open Sans", sans-serif; fill: #fff; text-anchor: middle; }
.dot::after, .word::after { content: ""; position: absolute; left: 19px; bottom: 0; width: 8px; height: 4px; border-radius: 2px; background: #888; }
.word { background: #f8f8f8; border-radius: 5px; box-shadow: 0 0 1px 1px #e2e2e2; }
.word svg { margin-right: 2px; }
.word::after { left: 14px; width: 20px; background: #20808f; }
.tray { display: flex; align-items: center; margin-left: 88px; font-size: 14.500px; line-height: 20px; letter-spacing: -.2px; }
.k-cloud { margin-left: 22px; }
.k-sync { margin-left: 18px; }
.k-lang { width: 48px; margin: 0 13px 0 13px; padding-bottom: 1px; display: flex; flex-direction: column; align-items: center; }
.k-vol { margin-left: 9.500px; }
.k-bat { margin-left: 9.500px; }
.k-time { width: 98px; padding-bottom: 2px; display: flex; flex-direction: column; align-items: flex-end; }
.c2 { font-size: 15px; letter-spacing: 0; }
.k-badge { width: 20px; height: 20px; margin-left: 9px; border-radius: 50%; background: #1f6b78; color: #fff; text-align: center; font-weight: 600; font-size: 12px; line-height: 20px; }
```
